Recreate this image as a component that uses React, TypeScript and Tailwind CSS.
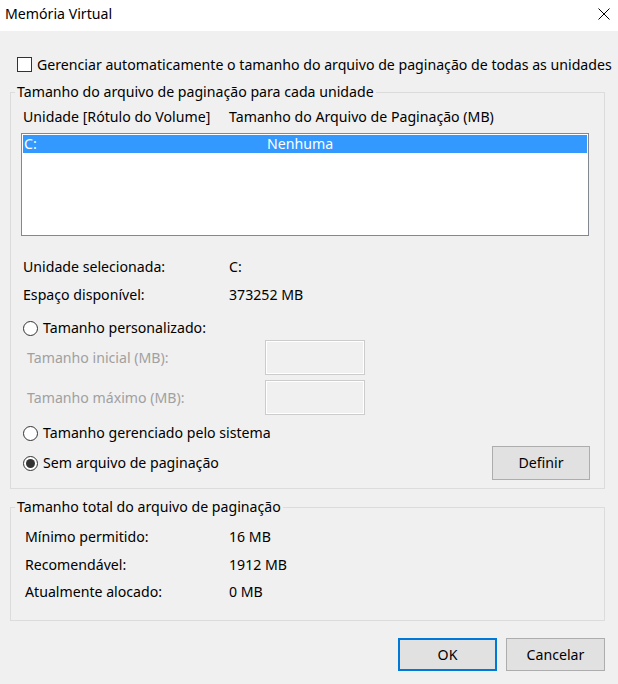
import React from "react";

function Radio({ checked }: { checked?: boolean }) {
  return (
    <span className="flex h-[15px] w-[15px] shrink-0 items-center justify-center rounded-full border border-[#333333] bg-white">
      {checked && <span className="h-[9px] w-[9px] rounded-full bg-[#333333]" />}
    </span>
  );
}

function Group({
  legend,
  className,
  children,
}: {
  legend: string;
  className?: string;
  children: React.ReactNode;
}) {
  return (
    <div className={"relative border border-[#dcdcdc] " + (className ?? "")}>
      <span className="absolute left-[4px] top-[-9px] bg-[#f0f0f0] px-[2px] leading-[16px] whitespace-nowrap">
        {legend}
      </span>
      {children}
    </div>
  );
}

export default function App() {
  return (
    <div
      className="h-[684px] w-[618px] overflow-hidden bg-[#f0f0f0] text-[14.15px] text-black"
      style={{ fontFamily: '"Noto Sans", "Open Sans", sans-serif' }}
    >
      {/* Title bar */}
      <div className="flex h-[31px] items-center justify-between bg-white pb-[3px] pl-[5px] pr-[8px]">
        <span className="leading-[16px]">Memória Virtual</span>
        <svg width="12" height="12" viewBox="0 0 12 12">
          <path d="M0.5 0.5 L11.5 11.5 M11.5 0.5 L0.5 11.5" stroke="#000" strokeWidth="1" fill="none" />
        </svg>
      </div>

      <div className="px-[10px]">
        {/* Checkbox row */}
        <div className="mt-[26px] flex h-[15px] items-center pl-[7px]">
          <span className="h-[15px] w-[15px] shrink-0 border border-[#333333] bg-white" />
          <span className="ml-[5px] whitespace-nowrap leading-[16px]">
            Gerenciar automaticamente o tamanho do arquivo de paginação de todas as unidades
          </span>
        </div>

        {/* Group 1 */}
        <Group legend="Tamanho do arquivo de paginação para cada unidade" className="mt-[20px] h-[397px] w-[595px]">
          <div className="mt-[16px] flex h-[16px] items-center pl-[12px] leading-[16px]">
            <span className="w-[206px]">Unidade [Rótulo do Volume]</span>
            <span>Tamanho do Arquivo de Paginação (MB)</span>
          </div>

          <div className="ml-[10px] mt-[8px] h-[103px] w-[568px] border border-[#828790] bg-white p-[1px]">
            <div className="flex h-[18px] items-center bg-[#3399ff] pl-[1px] leading-[16px] text-white">
              <span className="w-[243px]">C:</span>
              <span>Nenhuma</span>
            </div>
          </div>

          <div className="mt-[23px] flex h-[16px] items-center pl-[12px] leading-[16px]">
            <span className="w-[206px]">Unidade selecionada:</span>
            <span>C:</span>
          </div>
          <div className="mt-[12px] flex h-[16px] items-center pl-[12px] leading-[16px]">
            <span className="w-[206px]">Espaço disponível:</span>
            <span>373252 MB</span>
          </div>

          <div className="mt-[17px] flex h-[16px] items-center pl-[12px] leading-[16px]">
            <Radio />
            <span className="ml-[5px]">Tamanho personalizado:</span>
          </div>

          <div className="mt-[4px] flex h-[35px] items-center pl-[16px] leading-[16px] text-[#a0a0a0]">
            <span className="w-[238px]">Tamanho inicial (MB):</span>
            <span className="h-[35px] w-[100px] border border-[#cccccc] shadow-[inset_0_0_0_1px_#ffffff]" />
          </div>
          <div className="mt-[5px] flex h-[35px] items-center pl-[16px] leading-[16px] text-[#a0a0a0]">
            <span className="w-[238px]">Tamanho máximo (MB):</span>
            <span className="h-[35px] w-[100px] border border-[#cccccc] shadow-[inset_0_0_0_1px_#ffffff]" />
          </div>

          <div className="mt-[10px] flex h-[16px] items-center pl-[12px] leading-[16px]">
            <Radio />
            <span className="ml-[5px]">Tamanho gerenciado pelo sistema</span>
          </div>

          <div className="mt-[5px] flex h-[34px] items-center pl-[12px] pr-[14px] leading-[16px]">
            <Radio checked />
            <span className="ml-[5px]">Sem arquivo de paginação</span>
            <button className="ml-auto flex h-[34px] w-[98px] items-center justify-center border border-[#adadad] bg-[#e1e1e1]">
              Definir
            </button>
          </div>
        </Group>

        {/* Group 2 */}
        <Group legend="Tamanho total do arquivo de paginação" className="mt-[18px] h-[114px] w-[595px]">
          <div className="mt-[21px] flex h-[16px] items-center pl-[14px] leading-[16px]">
            <span className="w-[204px]">Mínimo permitido:</span>
            <span>16 MB</span>
          </div>
          <div className="mt-[12px] flex h-[16px] items-center pl-[14px] leading-[16px]">
            <span className="w-[204px]">Recomendável:</span>
            <span>1912 MB</span>
          </div>
          <div className="mt-[11px] flex h-[16px] items-center pl-[14px] leading-[16px]">
            <span className="w-[204px]">Atualmente alocado:</span>
            <span>0 MB</span>
          </div>
        </Group>

        {/* Buttons */}
        <div className="mt-[17px] flex w-[595px] justify-end gap-[9px]">
          <button className="flex h-[33px] w-[99px] items-center justify-center border-2 border-[#0078d7] bg-[#e1e1e1]">
            OK
          </button>
          <button className="flex h-[33px] w-[99px] items-center justify-center border border-[#adadad] bg-[#e1e1e1]">
            Cancelar
          </button>
        </div>
      </div>
    </div>
  );
}
